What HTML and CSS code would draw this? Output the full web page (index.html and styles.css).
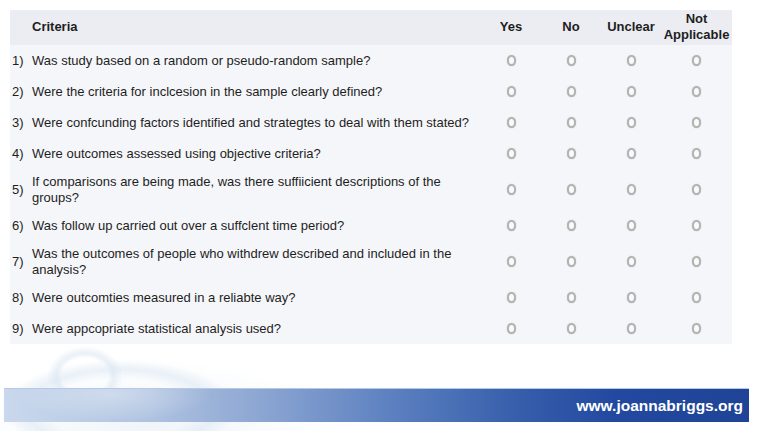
FILE: index.html
```html
<!DOCTYPE html>
<html>
<head>
<meta charset="utf-8">
<link rel="stylesheet" href="styles.css">
</head>
<body>
<div class="page">
  <div class="table">
    <div class="row head">
      <div class="num"></div>
      <div class="crit">Criteria</div>
      <div class="opt">Yes</div>
      <div class="opt">No</div>
      <div class="opt">Unclear</div>
      <div class="opt">Not<br>Applicable</div>
    </div>
    <div class="row">
      <div class="num">1)</div>
      <div class="text">Was study based on a random or pseudo-random sample?</div>
      <div class="opt"><span class="radio"></span></div>
      <div class="opt"><span class="radio"></span></div>
      <div class="opt"><span class="radio"></span></div>
      <div class="opt"><span class="radio"></span></div>
    </div>
    <div class="row">
      <div class="num">2)</div>
      <div class="text">Were the criteria for inclcesion in the sample clearly defined?</div>
      <div class="opt"><span class="radio"></span></div>
      <div class="opt"><span class="radio"></span></div>
      <div class="opt"><span class="radio"></span></div>
      <div class="opt"><span class="radio"></span></div>
    </div>
    <div class="row">
      <div class="num">3)</div>
      <div class="text">Were confcunding factors identified and strategtes to deal with them stated?</div>
      <div class="opt"><span class="radio"></span></div>
      <div class="opt"><span class="radio"></span></div>
      <div class="opt"><span class="radio"></span></div>
      <div class="opt"><span class="radio"></span></div>
    </div>
    <div class="row">
      <div class="num">4)</div>
      <div class="text">Were outcomes assessed using objective criteria?</div>
      <div class="opt"><span class="radio"></span></div>
      <div class="opt"><span class="radio"></span></div>
      <div class="opt"><span class="radio"></span></div>
      <div class="opt"><span class="radio"></span></div>
    </div>
    <div class="row">
      <div class="num">5)</div>
      <div class="text">If comparisons are being made, was there suffiicient descriptions of the groups?</div>
      <div class="opt"><span class="radio"></span></div>
      <div class="opt"><span class="radio"></span></div>
      <div class="opt"><span class="radio"></span></div>
      <div class="opt"><span class="radio"></span></div>
    </div>
    <div class="row">
      <div class="num">6)</div>
      <div class="text">Was follow up carried out over a suffclent time period?</div>
      <div class="opt"><span class="radio"></span></div>
      <div class="opt"><span class="radio"></span></div>
      <div class="opt"><span class="radio"></span></div>
      <div class="opt"><span class="radio"></span></div>
    </div>
    <div class="row">
      <div class="num">7)</div>
      <div class="text">Was the outcomes of people who withdrew described and included in the analysis?</div>
      <div class="opt"><span class="radio"></span></div>
      <div class="opt"><span class="radio"></span></div>
      <div class="opt"><span class="radio"></span></div>
      <div class="opt"><span class="radio"></span></div>
    </div>
    <div class="row">
      <div class="num">8)</div>
      <div class="text">Were outcomties measured in a reliabte way?</div>
      <div class="opt"><span class="radio"></span></div>
      <div class="opt"><span class="radio"></span></div>
      <div class="opt"><span class="radio"></span></div>
      <div class="opt"><span class="radio"></span></div>
    </div>
    <div class="row">
      <div class="num">9)</div>
      <div class="text">Were appcopriate statistical analysis used?</div>
      <div class="opt"><span class="radio"></span></div>
      <div class="opt"><span class="radio"></span></div>
      <div class="opt"><span class="radio"></span></div>
      <div class="opt"><span class="radio"></span></div>
    </div>
  </div>
  <div class="footer">
    <div class="band"><span class="url">www.joannabriggs.org</span></div>
  </div>
</div>
</body>
</html>
```

FILE: styles.css
```css
* { box-sizing: border-box; }
html, body { margin: 0; padding: 0; background: #ffffff; }
body {
  font-family: "Liberation Sans", Arial, sans-serif;
  font-size: 13px;
  color: #1e1e1e;
  width: 759px;
  height: 431px;
  overflow: hidden;
}
.page { padding-top: 10px; }
.table { margin-left: 10px; width: 722px; }
.row {
  display: grid;
  grid-template-columns: 22px 449px 60px 60px 60px 71px;
  align-items: center;
  min-height: 31px;
  padding: 4.5px 0 4.5px;
  background: #f5f6f9;
  line-height: 16px;
}
.row.head {
  background: #ebedf2;
  min-height: 35px;
  padding: 1px 0 2px;
  font-weight: bold;
}
.num { padding-left: 2px; }
.text { padding-right: 4px; }
.opt { text-align: center; display: flex; justify-content: center; align-items: center; }
.head .opt { display: block; }
.radio {
  display: block;
  width: 9px;
  height: 11px;
  border: 2px solid #b4b4b4;
  border-radius: 50%;
  background: #fafafa;
  box-shadow: 0 0 1px rgba(140,140,140,0.7);
}
.footer {
  height: 87px;
  padding-top: 44px;
  padding-left: 4px;
  background:
    radial-gradient(ellipse 38px 30px at 85px 32px, rgba(255,255,255,0) 60%, rgba(215,228,240,0.55) 75%, rgba(255,255,255,0) 100%),
    radial-gradient(ellipse 130px 55px at 120px 65px, rgba(255,255,255,0) 55%, rgba(220,232,243,0.6) 72%, rgba(255,255,255,0) 90%),
    radial-gradient(ellipse 230px 80px at 150px 80px, rgba(225,235,245,0.5) 0%, rgba(255,255,255,0) 80%);
}
.band {
  width: 745px;
  height: 34px;
  border-top: 1px solid #b7c8e4;
  background:
    radial-gradient(ellipse 140px 40px at 110px 5px, rgba(255,255,255,0.35), rgba(255,255,255,0) 70%),
    linear-gradient(to right, #c9d8ec 0%, #aec2e0 20%, #8ba5d2 35%, #5c80c0 52%, #3860ac 68%, #2249a0 82%, #1f4396 100%);
  display: flex;
  align-items: center;
  justify-content: flex-end;
  padding-right: 6px;
}
.url {
  color: #ffffff;
  font-weight: bold;
  font-size: 15.5px;
}
```
